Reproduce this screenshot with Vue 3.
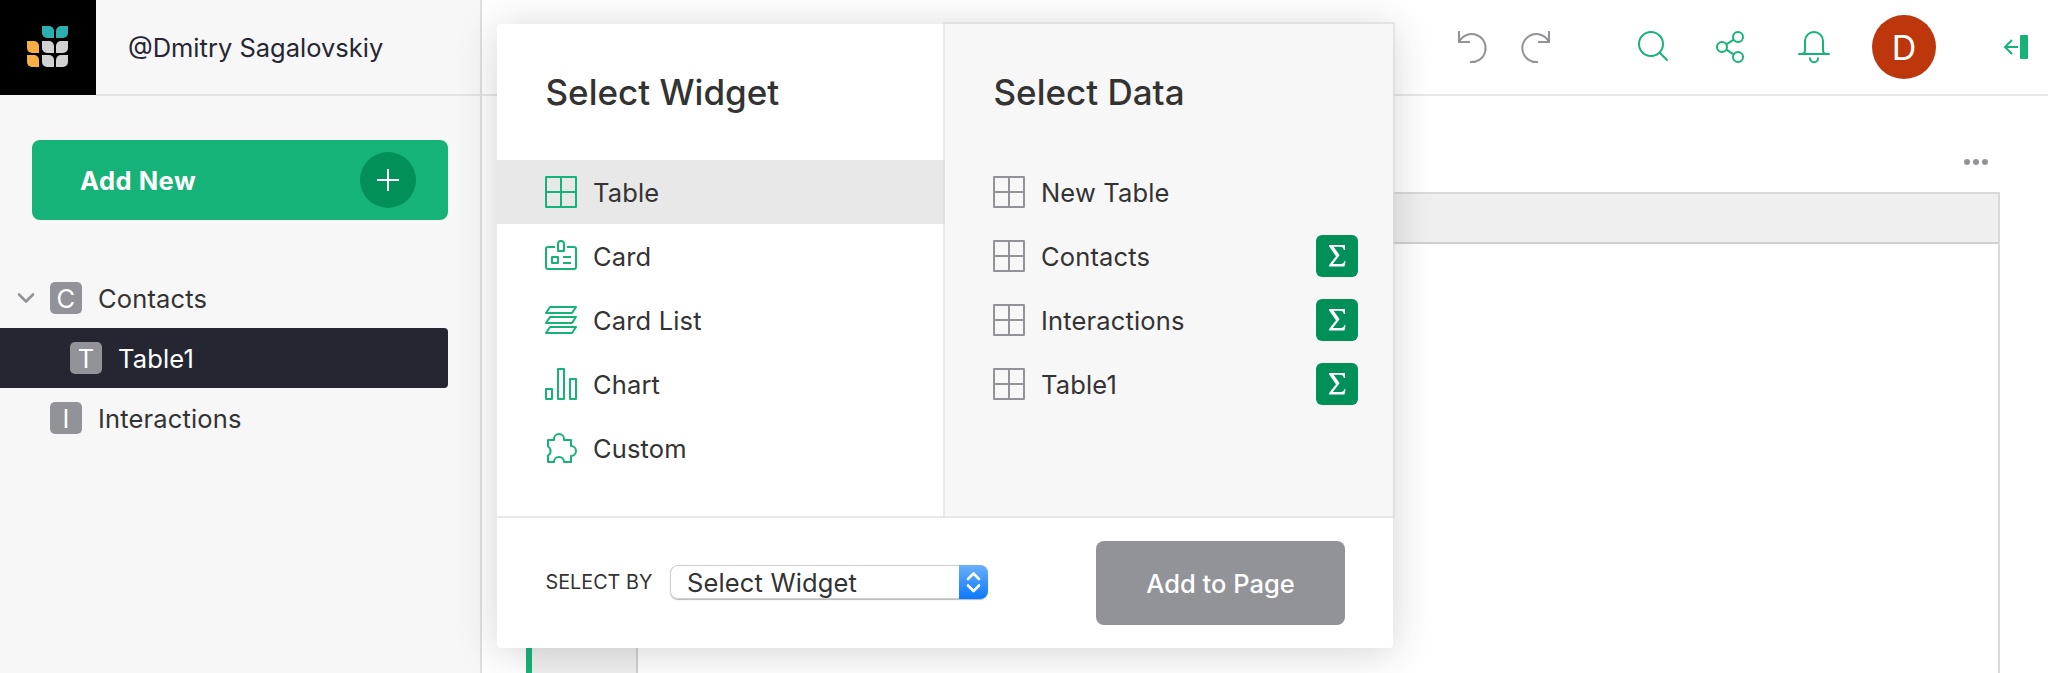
<script setup>
const widgets = [
  { name: 'Table', icon: 'table' },
  { name: 'Card', icon: 'card' },
  { name: 'Card List', icon: 'list' },
  { name: 'Chart', icon: 'chart' },
  { name: 'Custom', icon: 'custom' },
]
const sources = [
  { name: 'New Table', summary: false },
  { name: 'Contacts', summary: true },
  { name: 'Interactions', summary: true },
  { name: 'Table1', summary: true },
]
const pages = [
  { name: 'Contacts', open: true },
  { name: 'Table1', child: true, active: true },
  { name: 'Interactions' },
]
const petals = ['', 'teal a', 'teal b', 'gold a', 'grey a', 'grey b', 'gold a', 'grey a', 'grey b']
</script>

<template>
  <div class="app">
    <aside class="side">
      <div class="brand">
        <div class="logo">
          <i v-for="(p, n) in petals" :key="n" :class="p"></i>
        </div>
        <div class="owner"><span>@Dmitry Sagalovskiy</span></div>
      </div>
      <button class="add-new">
        <span>Add New</span>
        <svg width="56" height="56" viewBox="0 0 56 56">
          <circle cx="28" cy="28" r="28" fill="#009058" />
          <path d="M28 17v22M17 28h22" stroke="#fff" stroke-width="2" />
        </svg>
      </button>
      <nav>
        <div v-for="p in pages" :key="p.name" class="page" :class="{ child: p.child, active: p.active }">
          <div class="caret">
            <svg v-if="p.open" width="18" height="12" viewBox="0 0 18 12" fill="none" stroke="#929299" stroke-width="2.6" stroke-linecap="round" stroke-linejoin="round">
              <path d="M2 2.500l7 7 7-7" />
            </svg>
          </div>
          <b class="initial">{{ p.name[0] }}</b>
          <span>{{ p.name }}</span>
        </div>
      </nav>
    </aside>

    <main class="main">
      <header class="topbar">
        <svg class="undo" width="32" height="34" viewBox="0 0 32 34" fill="none" stroke="#929299" stroke-width="2">
          <path d="M3 0v11h11M3.3 10.500A14 14 0 1 1 14 31" />
        </svg>
        <svg class="redo" width="32" height="34" viewBox="0 0 32 34" fill="none" stroke="#929299" stroke-width="2">
          <path d="M29 0v11H18M28.700 10.500A14 14 0 1 0 18 31" />
        </svg>
        <svg class="search" width="32" height="34" viewBox="0 0 32 34" fill="none" stroke="#16b378" stroke-width="2" stroke-linecap="round">
          <circle cx="14" cy="14" r="12" /><path d="M22.7 22.7l7.3 7.3" />
        </svg>
        <svg class="share" width="32" height="34" viewBox="0 0 32 34" fill="none" stroke="#16b378" stroke-width="2">
          <circle cx="7" cy="17" r="5" /><circle cx="23" cy="7" r="5" /><circle cx="23" cy="27" r="5" />
          <path d="M11.3 14.4l7.4-4.7M11.3 19.6l7.4 4.7" />
        </svg>
        <svg class="bell" width="34" height="34" viewBox="0 0 34 34" fill="none" stroke="#16b378" stroke-width="2" stroke-linecap="round">
          <path d="M2 24h30M4.500 24C7 24 8 22.800 8 20.300V11a9 9 0 0 1 18 0v9.300c0 2.500 1 3.700 3.500 3.700" />
          <path d="M13 28.300a4 4 0 0 0 8 0" />
        </svg>
        <div class="avatar">D</div>
        <svg class="collapse" width="26" height="26" viewBox="0 0 26 26" fill="none" stroke="#16b378" stroke-width="2">
          <path d="M15 13H2.500M9 6l-7 7 7 7" /><rect x="17" y="1" width="8" height="24" rx="1" fill="#16b378" stroke="none" />
        </svg>
      </header>
      <section class="section">
        <div class="menu"><i></i><i></i><i></i></div>
        <div class="grid">
          <div class="grid-head"></div>
          <div class="grid-body"><div class="rownums"></div></div>
        </div>
      </section>
    </main>

    <div class="modal">
      <div class="panels">
        <section class="panel left">
          <h2>Select Widget</h2>
          <div v-for="(w, n) in widgets" :key="w.name" class="item" :class="{ selected: n === 0 }">
            <svg width="32" height="32" viewBox="0 0 32 32" fill="none" stroke="#16b378" stroke-width="2" stroke-linejoin="round">
              <path v-if="w.icon === 'table'" d="M1 1h30v30H1zM16 1v30M1 16h30" />
              <g v-else-if="w.icon === 'card'">
                <path d="M10 7H3a2 2 0 0 0-2 2v18a2 2 0 0 0 2 2h26a2 2 0 0 0 2-2V9a2 2 0 0 0-2-2h-7" />
                <path d="M13 11V4a3 3 0 0 1 6 0v7zM7 17h6v6H7zM18 17h8M18 23h8" />
              </g>
              <path v-else-if="w.icon === 'list'" d="M5 3h26l-4 6H1zM5 13h26l-4 6H1zM5 23h26l-4 6H1z" />
              <path v-else-if="w.icon === 'chart'" d="M1 21h6v10H1zM13 1h6v30h-6zM25 11h6v20h-6z" />
              <path v-else d="M3 8h6V7a5 5 0 0 1 10 0v1h7v6a5 5 0 0 1 0 10v6h-7a5 5 0 0 0-10 0H3v-6.500a5.200 5.200 0 0 0 0-9z" />
            </svg>
            <span>{{ w.name }}</span>
          </div>
        </section>
        <section class="panel right">
          <h2>Select Data</h2>
          <div v-for="s in sources" :key="s.name" class="item">
            <svg width="32" height="32" viewBox="0 0 32 32" fill="none" stroke="#929299" stroke-width="2" stroke-linejoin="round">
              <path d="M1 1h30v30H1zM16 1v30M1 16h30" />
            </svg>
            <span>{{ s.name }}</span>
            <div v-if="s.summary" class="sigma">
              <svg width="18" height="24" viewBox="0 0 18 24" fill="#fff">
                <path d="M1 1h16v5h-1.200C15.400 3.600 14.500 2.700 12 2.700H5.600l6 8.600L4.800 20h7.800c2.400 0 3.300-.8 3.900-3h1L16.500 22.500H1v-1.200L8 12.200 1 2.200z" />
              </svg>
            </div>
          </div>
        </section>
      </div>
      <footer>
        <label>SELECT BY</label>
        <div class="select">
          <span>Select Widget</span>
          <div class="stepper">
            <svg width="29" height="34" viewBox="0 0 29 34" fill="none" stroke="#fff" stroke-width="2.600" stroke-linecap="round" stroke-linejoin="round">
              <path d="M9 14l5.500-5.500L20 14M9 20.500l5.500 5.500 5.500-5.500" />
            </svg>
          </div>
        </div>
        <button class="submit">Add to Page</button>
      </footer>
    </div>
  </div>
</template>

<style>
body { background: #fff; overflow: hidden; }
</style>

<style scoped>
* { box-sizing: border-box; }
.app {
  position: relative;
  display: flex;
  width: 2048px;
  height: 673px;
  overflow: hidden;
  font: 25.5px/1.2 Inter, "Liberation Sans", sans-serif;
  color: #333;
  background: #fff;
}
button { border: 0; font: inherit; color: #fff; padding: 0; }
svg { display: block; flex: none; }
.side { width: 482px; flex: none; background: #f7f7f7; border-right: 2px solid #dfdfdf; }
.brand { display: flex; height: 96px; }
.logo {
  width: 96px;
  height: 95px;
  padding: 26px 27px;
  background: #000;
  display: grid;
  grid-template-columns: repeat(3, 12px);
  grid-auto-rows: 12px;
  gap: 2.6px;
}
.logo .teal { background: #2cb0af; }
.logo .gold { background: #f9ae41; }
.logo .grey { background: #d2d2d2; }
.logo .a { border-radius: 0 5px 0 5px; }
.logo .b { border-radius: 5px 0 5px 0; }
.owner {
  flex: 1;
  padding: 33px 0 0 32px;
  border-bottom: 2px solid #e4e4e4;
  color: #262633;
}
.add-new {
  display: flex;
  align-items: center;
  justify-content: space-between;
  width: 416px;
  height: 80px;
  margin: 44px 0 48px 32px;
  padding: 0 32px 0 48px;
  border-radius: 8px;
  background: #16b378;
  font-weight: 700;
  letter-spacing: 0.5px;
}
.add-new span { padding-top: 2px; }
.page {
  display: flex;
  align-items: center;
  width: 448px;
  height: 60px;
  letter-spacing: 0.15px;
}
.page .caret { width: 50px; padding-left: 17px; }
.page.child { padding-left: 20px; }
.page.active { background: #262633; color: #fff; border-radius: 0 4px 4px 0; }
.page span { padding-top: 2px; }
.initial {
  width: 32px;
  height: 32px;
  margin-right: 16px;
  border-radius: 5px;
  background: #929299;
  color: #fff;
  font-weight: 400;
  line-height: 34px;
  text-align: center;
}
.main { flex: 1; display: flex; flex-direction: column; }
.topbar {
  display: flex;
  height: 96px;
  padding-left: 974px;
  border-bottom: 2px solid #e8e8e8;
}
.undo { margin-top: 31px; }
.redo { margin: 31px 0 0 32px; }
.search { margin: 30px 0 0 85px; }
.share { margin: 30px 0 0 46px; }
.bell { margin: 30px 0 0 50px; }
.avatar {
  width: 64px;
  height: 64px;
  margin: 15px 0 0 41px;
  border-radius: 50%;
  background: #be370c;
  color: #fff;
  font-size: 34px;
  font-weight: 400;
  line-height: 66px;
  text-align: center;
}
.collapse { margin: 34px 0 0 67px; }
.section { flex: 1; display: flex; flex-direction: column; padding: 63px 48px 0 44px; }
.menu { display: flex; justify-content: flex-end; gap: 3px; padding-right: 12px; height: 33px; }
.menu i { width: 6px; height: 6px; border-radius: 50%; background: #929299; }
.grid { flex: 1; display: flex; flex-direction: column; border: 2px solid #d9d9d9; border-width: 2px 2px 0 0; }
.grid-head { height: 50px; background: #efefef; border-bottom: 2px solid #d0d0d0; }
.grid-body { flex: 1; display: flex; }
.rownums { width: 112px; background: #f0f0f0; border-left: 6px solid #16b378; border-right: 2px solid #d0d0d0; }
.modal {
  position: absolute;
  left: 497px;
  top: 24px;
  width: 896px;
  height: 624px;
  border-radius: 4px;
  background: #fff;
  box-shadow: 0 4px 40px rgba(38, 38, 51, 0.2);
}
.panels { display: flex; height: 494px; }
.panel { width: 448px; height: 494px; }
.left { border-bottom: 2px solid #e8e8e8; }
.right { height: 492px; background: #f7f7f7; outline: 2px solid rgba(217, 217, 217, 0.6); }
h2 { margin: 0; height: 136px; padding: 46px 0 0 48.5px; font-size: 35px; line-height: 44px; font-weight: 500; }
.item { display: flex; align-items: center; height: 64px; padding-left: 48px; letter-spacing: 0.15px; }
.item span { margin-left: 16px; padding-top: 2px; }
.selected { background: #e8e8e8; }
.sigma {
  display: flex;
  align-items: center;
  justify-content: center;
  width: 42px;
  height: 42px;
  margin-left: auto;
  margin-right: 35px;
  border-radius: 6px;
  background: #009058;
}
footer { display: flex; padding: 23px 48px 0; }
label { width: 125px; padding: 30px 0 0 0.5px; font-size: 19.8px; }
.select {
  display: flex;
  justify-content: space-between;
  width: 318px;
  height: 34px;
  margin-top: 24px;
  border-radius: 8px;
  overflow: hidden;
  box-shadow: inset 0 0 0 1px #cfcfcf, 0 1px 1px #b8b8b8;
  line-height: 36px;
}
.select span { padding-left: 17px; letter-spacing: 0.15px; }
.stepper { width: 29px; background: linear-gradient(#69b0fa, #0a78ff); }
.submit { width: 249px; height: 84px; padding-top: 2px; margin-left: auto; border-radius: 8px; background: #929299; font-weight: 500; }
</style>
